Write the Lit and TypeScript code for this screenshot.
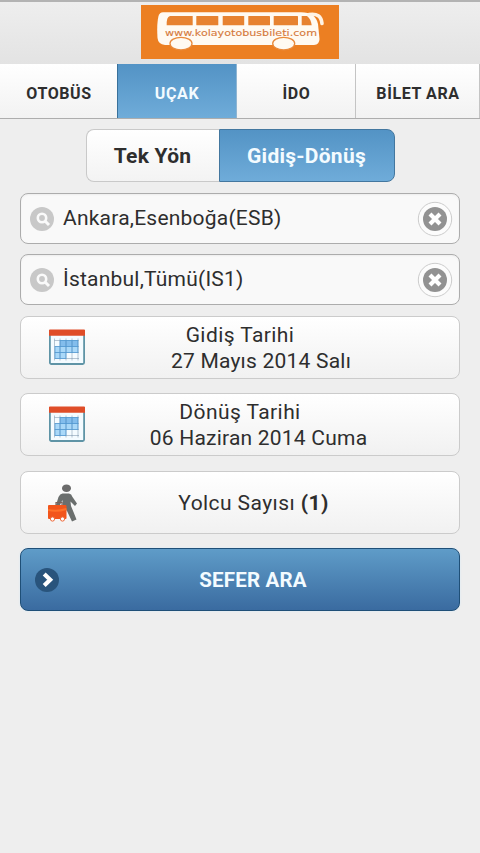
import { LitElement, html, css, svg } from "lit";
import { customElement } from "lit/decorators.js";

const windows = [
  [55.3, 22], [81.7, 21.5], [107.3, 21.7], [132.7, 24.3],
];

const logo = html`<svg class="logo" width="198" height="54" viewBox="0 0 198 54">
  <rect width="198" height="54" fill="#ec7f22" />
  <path d="M22 7.200H160C170 7.400 175 10.500 177 19L178.500 34Q178.500 39.500 173 40H24Q17 39 16.500 33C16 25 16 18 17.500 11Q18.500 7.400 22 7.200Z" fill="#fffaf2" />
  <path d="M168 9.500Q180 7.500 181 18.500" fill="none" stroke="#fff3e4" stroke-width="3.600" stroke-linecap="round" />
  <g fill="#e78230">
    <path d="M29 11H51.700V20.300H25.700Q25.300 12 29 11Z" />
    ${windows.map(([x, w]) => svg`<rect x=${x} y="11" width=${w} height="9.300" rx="0.600" />`)}
    <path d="M160.700 11H166Q170 14 170.700 20.300H160.700Z" />
  </g>
  <g fill="#fffaf2" stroke="#e98a3c" stroke-width="1.300">
    <ellipse cx="40" cy="38.600" rx="11" ry="6.300" />
    <ellipse cx="142.700" cy="38.600" rx="11" ry="6.300" />
  </g>
  <text x="24" y="31" textLength="152" lengthAdjust="spacingAndGlyphs" font-family="DejaVu Sans, sans-serif" font-size="8" fill="#d5793c" stroke="#d5793c" stroke-width=".1">www.kolayotobusbileti.com</text>
</svg>`;

const searchIcon = html`<svg width="24" height="24" viewBox="0 0 24 24">
  <circle cx="12" cy="12" r="12" fill="#c8c8c8" />
  <circle cx="12" cy="11" r="4.200" fill="none" stroke="#fafafa" stroke-width="2.600" />
  <path d="M15 14L19 18" stroke="#fafafa" stroke-width="3" />
</svg>`;

const clearIcon = html`<svg width="36" height="36" viewBox="0 0 36 36">
  <circle cx="18" cy="18" r="16.700" fill="#fcfcfc" stroke="#cccccc" />
  <circle cx="18" cy="18" r="12" fill="#929292" />
  <path d="M13 13L23 23M23 13L13 23" stroke="#fff" stroke-width="4.200" />
</svg>`;

const calendarIcon = html`<svg width="38" height="38" viewBox="0 0 38 38">
  <rect x="1.900" y="4" width="34.200" height="31" rx="1.500" fill="#f4fbff" stroke="#5f94a6" stroke-width="1.800" />
  <path d="M1 1Q1 .5 2 .5H36Q37 .5 37 1V6.700H1Z" fill="#df4d28" />
  <path d="M12 11.500H30V23.500H18V29.500H7V17.500H12Z" fill="#a9d8f8" />
  <path d="M12 11.500H30V17.500H12Z" fill="#83bdec" />
  <path d="M6.500 11.500H31M6.500 17.500H31M6.500 23.500H31M6.500 29.500H31M12 9.500V31.500M18 9.500V31.500M24 9.500V31.500M30 9.500V31.500M6.500 9.500V31.500" stroke="#66809b" stroke-opacity=".45" fill="none" />
  <path d="M12 11.500H30V23.500H7V17.500H30M12 11.500V29.500M18 11.500V29.500M24 11.500V23.500M7 23.500V29.500H18" stroke="#4d9bd8" stroke-opacity=".7" fill="none" />
</svg>`;

const walkerIcon = html`<svg width="38" height="38" viewBox="0 0 38 38">
  <ellipse cx="18.500" cy="4.300" rx="4.500" ry="3.800" fill="#6b6b6b" />
  <path d="M14.500 9.500H21Q23.500 9.800 24.500 13L29 19.500L27 22L22.500 17.500L23 22L25.500 28L28.500 35.500L24 37.500L19 27L14.500 22V16L12 21H8L10.500 13Q12 9.800 14.500 9.500Z" fill="#6a6e6d" />
  <path d="M8 21V18.500H14V21" fill="none" stroke="#7a625a" stroke-width="1.200" />
  <rect x="0" y="21" width="18.500" height="14" rx="1" fill="#f2551b" />
  <path d="M0 26Q9 28 18.500 25" stroke="#ff7029" stroke-width="2" fill="none" />
  <circle cx="4.500" cy="35" r="2.100" fill="#fff" stroke="#ee6a3a" />
  <circle cx="14.500" cy="35" r="2.100" fill="#fff" stroke="#ee6a3a" />
</svg>`;

const arrowIcon = html`<svg width="24" height="24" viewBox="0 0 24 24">
  <circle cx="12" cy="12" r="12" fill="#29547c" />
  <path d="M9.200 6L15.200 11.800L9.200 17.600" fill="none" stroke="#fff" stroke-width="4.200" />
</svg>`;

@customElement("app-root")
export class AppRoot extends LitElement {
  static styles = css`
    :host {
      display: block;
      box-sizing: border-box;
      height: 853px;
      overflow: hidden;
      background: #eeeeee;
      color: #2e2e2e;
      font-family: Roboto, sans-serif;
      font-size: 21px;
      white-space: nowrap;
    }
    * { box-sizing: border-box; }
    svg { display: block; flex: none; }
    header {
      height: 64px;
      border-top: 2px solid #b3b3b3;
      padding-top: 3px;
      background: linear-gradient(#eeeeee, #e3e3e3);
      display: flex;
      justify-content: center;
      align-items: flex-start;
    }
    .logo { margin-right: 1px; }
    nav {
      display: grid;
      grid-template-columns: 117px 120px 119px 124px;
      height: 55px;
      border-bottom: 1px solid #adadad;
      background: linear-gradient(#ffffff, #f2f2f2);
    }
    .tab {
      display: flex;
      align-items: center;
      justify-content: center;
      padding-top: 4px;
      padding-left: 1px;
      font-size: 16px;
      letter-spacing: 0.6px;
      font-weight: 700;
      border-right: 1px solid #c4c4c4;
    }
    .tab:first-child { border-right: 0; }
    .on {
      color: #f3fbff;
      background: linear-gradient(#5393c5, #6facd9);
    }
    .tab.on {
      padding-left: 0;
      border-left: 1px solid #39719b;
      border-right: 1px solid #8fb5d2;
    }
    .toggle {
      display: grid;
      grid-template-columns: 133px 176px;
      width: 309px;
      height: 53px;
      margin: 10px 0 0 86px;
      font-weight: 700;
      letter-spacing: 0.25px;
    }
    .choice {
      display: flex;
      align-items: center;
      justify-content: center;
      padding-right: 1px;
      border: 1px solid #c9c9c9;
      border-right: 0;
      border-radius: 8px 0 0 8px;
      background: linear-gradient(#ffffff, #f3f3f3);
    }
    .choice.on {
      border: 1px solid #43779f;
      border-radius: 0 8px 8px 0;
      background: linear-gradient(#5393c5, #6facd9);
    }
    .field {
      display: flex;
      align-items: center;
      height: 51px;
      margin: 11px 20px 0;
      padding: 0 6px 0 9px;
      border: 1px solid #acacac;
      border-radius: 8px;
      background: #f9f9f9;
      box-shadow: inset 0 1px 2px rgba(0, 0, 0, 0.05);
    }
    .field .value { flex: 1; padding-left: 9px; padding-bottom: 2px; letter-spacing: 0.22px; }
    .field + .field { margin-top: 10px; }
    .row {
      display: grid;
      grid-template-columns: 38px 1fr;
      align-items: center;
      height: 63px;
      margin: 11px 20px 0;
      padding-left: 27px;
      border: 1px solid #cbcbcb;
      border-radius: 8px;
      background: linear-gradient(#ffffff, #f1f1f1);
      line-height: 26px;
      text-align: center;
    }
    .row + .row { margin-top: 14px; }
    .row + .row.passengers { margin-top: 15px; }
    .lines { display: flex; flex-direction: column; align-items: center; }
    .title { padding-right: 65px; letter-spacing: 0.42px; }
    .date { letter-spacing: 0.22px; padding-right: 23px; }
    .date.return { padding-right: 28px; }
    .pax { padding-right: 38px; letter-spacing: 0.42px; }
    .submit {
      display: grid;
      grid-template-columns: 24px 1fr;
      align-items: center;
      height: 63px;
      margin: 14px 20px 0;
      padding: 0 12px 0 14px;
      border: 1px solid #1f4f77;
      border-radius: 8px;
      background: linear-gradient(#5f9cc8, #3a6ba0);
      color: #f3fbff;
      font-weight: 700;
      text-align: center;
      box-shadow: 0 0 2px #d5eafb;
    }
    .submit .caption { font-size: 20.500px; letter-spacing: 0.2px; }
  `;

  render() {
    return html`
      <header>${logo}</header>
      <nav>
        <div class="tab"><span>OTOBÜS</span></div>
        <div class="tab on"><span>UÇAK</span></div>
        <div class="tab"><span>İDO</span></div>
        <div class="tab"><span>BİLET ARA</span></div>
      </nav>
      <div class="toggle">
        <div class="choice"><span>Tek Yön</span></div>
        <div class="choice on"><span>Gidiş-Dönüş</span></div>
      </div>
      <div class="field">${searchIcon}<span class="value">Ankara,Esenboğa(ESB)</span>${clearIcon}</div>
      <div class="field">${searchIcon}<span class="value">İstanbul,Tümü(IS1)</span>${clearIcon}</div>
      <div class="row">
        ${calendarIcon}
        <div class="lines"><span class="title">Gidiş Tarihi</span><span class="date">27 Mayıs 2014 Salı</span></div>
      </div>
      <div class="row">
        ${calendarIcon}
        <div class="lines"><span class="title">Dönüş Tarihi</span><span class="date return">06 Haziran 2014 Cuma</span></div>
      </div>
      <div class="row passengers">${walkerIcon}<span class="pax">Yolcu Sayısı <b>(1)</b></span></div>
      <div class="submit">${arrowIcon}<span class="caption">SEFER ARA</span></div>
    `;
  }
}
